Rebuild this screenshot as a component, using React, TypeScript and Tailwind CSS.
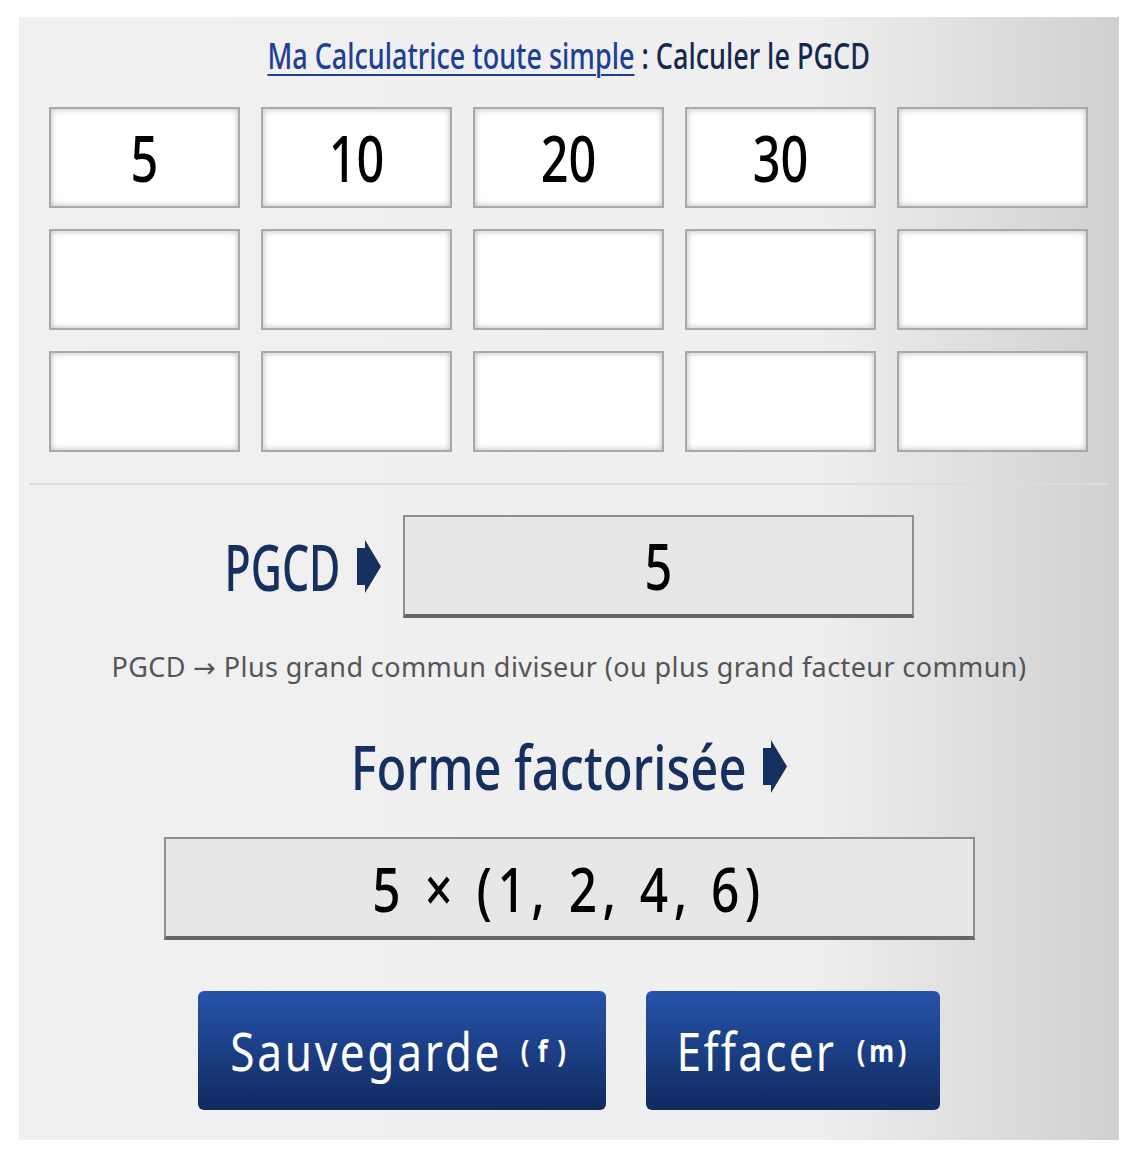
import React from "react";

const FONT = "font-['Noto_Sans','DejaVu_Sans',sans-serif]";

const values = ["5", "10", "20", "30", "", "", "", "", "", "", "", "", "", "", ""];

const Arrow = () => (
  <svg width="24" height="53" viewBox="0 0 24 53" className="shrink-0">
    <path d="M0 8 L8 8 L8 0 L24 26.5 L8 53 L8 45 L0 45 Z" fill="#15305f" />
  </svg>
);

export default function App() {
  return (
    <div className={`min-h-[1154px] bg-white pt-[17px] pl-[19px] ${FONT}`}>
      <div className="w-[1100px] h-[1123px] bg-[linear-gradient(to_right,#f0f0f0_0%,#efefef_72%,#d0d0d0_100%)] pt-[17px]">
        {/* titre */}
        <div className="h-[44px] flex items-center justify-center">
          <span className="inline-block whitespace-nowrap scale-x-[0.75] text-[36px] leading-none font-medium">
            <a href="#" className="text-[#1d3f94] underline underline-offset-[5px] decoration-2">
              Ma Calculatrice toute simple
            </a>
            <span className="text-[#14284e]"> : Calculer le PGCD</span>
          </span>
        </div>

        {/* saisie des nombres */}
        <div className="mt-[29px] pl-[30px] pr-[31px] grid grid-cols-5 gap-[21px]">
          {values.map((v, i) => (
            <div
              key={i}
              className="h-[101px] bg-white border-2 border-[#a9a9a9] shadow-[inset_0_0_6px_rgba(0,0,0,0.28)] flex items-center justify-center"
            >
              <span className="inline-block scale-x-[0.76] text-[64px] leading-none font-medium text-black">{v}</span>
            </div>
          ))}
        </div>

        <div className="mt-[31px] mx-[10px] h-[2px] bg-[#dcdcdc]" />

        {/* resultat PGCD */}
        <div className="mt-[30px] flex items-center justify-center">
          <span className="w-[116px] flex justify-center">
            <span className="inline-block whitespace-nowrap scale-x-[0.67] text-[64px] leading-none font-medium text-[#15305f]">
              PGCD
            </span>
          </span>
          <span className="ml-[16px] mr-[22px] flex">
            <Arrow />
          </span>
          <div className="w-[511px] h-[103px] bg-[#e7e7e7] border-2 border-b-4 border-[#8e8e8e] border-b-[#666] flex items-center justify-center">
            <span className="inline-block scale-x-[0.76] text-[64px] leading-none font-medium text-black">5</span>
          </div>
        </div>

        <div className="mt-[34px] h-[30px] flex items-center justify-center text-[27px] text-[#555] tracking-[0.015em]">
          PGCD → Plus grand commun diviseur (ou plus grand facteur commun)
        </div>

        {/* forme factorisee */}
        <div className="mt-[54px] h-[60px] flex items-center justify-center">
          <span className="w-[395px] flex justify-center">
            <span className="inline-block whitespace-nowrap scale-x-[0.79] text-[62px] leading-none font-medium text-[#15305f]">
              Forme factorisée
            </span>
          </span>
          <span className="ml-[17px] flex">
            <Arrow />
          </span>
        </div>

        <div className="mt-[41px] mx-auto w-[811px] h-[103px] bg-[#e7e7e7] border-2 border-b-4 border-[#8e8e8e] border-b-[#666] flex items-center justify-center">
          <span className="inline-block whitespace-nowrap scale-x-[0.8] text-[62px] leading-none font-medium text-black tracking-[0.11em]">
            5 × (1, 2, 4, 6)
          </span>
        </div>

        {/* boutons */}
        <div className="mt-[51px] flex justify-center gap-[40px]">
          <button className="w-[408px] h-[119px] rounded-[6px] bg-[linear-gradient(to_bottom,#2553ab,#112a5e)] text-white flex items-center justify-center">
            <span className="inline-flex items-center whitespace-nowrap scale-x-[0.85]">
              <span className="text-[52px] leading-none tracking-[0.06em]">Sauvegarde</span>
              <span className="ml-[22px] text-[30px] leading-none font-bold tracking-[0.33em]">(f)</span>
            </span>
          </button>
          <button className="w-[294px] h-[119px] rounded-[6px] bg-[linear-gradient(to_bottom,#2553ab,#112a5e)] text-white flex items-center justify-center">
            <span className="inline-flex items-center whitespace-nowrap scale-x-[0.85]">
              <span className="text-[52px] leading-none tracking-[0.05em]">Effacer</span>
              <span className="ml-[24px] text-[30px] leading-none font-bold tracking-[0.15em]">(m)</span>
            </span>
          </button>
        </div>
      </div>
    </div>
  );
}
